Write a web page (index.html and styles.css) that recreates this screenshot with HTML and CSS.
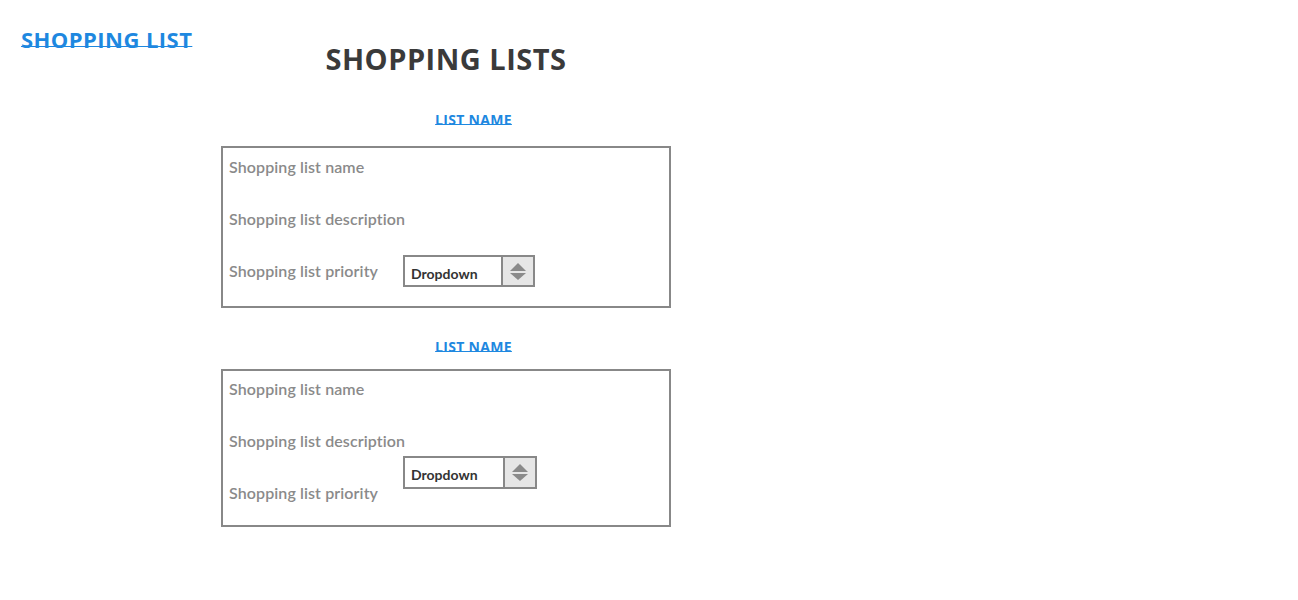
FILE: index.html
```html
<!DOCTYPE html>
<html>
<head>
<meta charset="utf-8">
<title>Shopping lists</title>
<link rel="stylesheet" href="styles.css">
</head>
<body>
<div class="page">
  <aside class="sidebar">
    <a class="brand" href="#">SHOPPING LIST</a>
  </aside>
  <main class="main">
    <h1 class="title">SHOPPING LISTS</h1>

    <section class="list">
      <a class="list-name" href="#">LIST NAME</a>
      <div class="card">
        <div class="field">Shopping list name</div>
        <div class="field">Shopping list description</div>
        <div class="field field-select">
          <span class="label">Shopping list priority</span>
          <div class="dropdown">
            <span class="dropdown-text">Dropdown</span>
            <span class="dropdown-btn"><span class="tri-up"></span><span class="tri-down"></span></span>
          </div>
        </div>
      </div>
    </section>

    <section class="list list-second">
      <a class="list-name" href="#">LIST NAME</a>
      <div class="card">
        <div class="field">Shopping list name</div>
        <div class="field">Shopping list description</div>
        <div class="field field-raised">
          <span class="label">Shopping list priority</span>
          <div class="dropdown dropdown-raised">
            <span class="dropdown-text">Dropdown</span>
            <span class="dropdown-btn"><span class="tri-up"></span><span class="tri-down"></span></span>
          </div>
        </div>
      </div>
    </section>
  </main>
</div>
</body>
</html>
```
FILE: styles.css
```css
html, body {
  margin: 0;
  padding: 0;
  background: #ffffff;
}

.page {
  display: flex;
  align-items: flex-start;
  font-family: "Open Sans", "Liberation Sans", sans-serif;
}

.sidebar {
  width: 200px;
  padding: 24px 0 0 21px;
  flex: none;
}

.brand {
  display: inline-block;
  font-size: 22px;
  letter-spacing: 0.45px;
  font-weight: 700;
  color: #1e88e0;
  text-decoration: underline;
  text-decoration-thickness: 1px;
  text-underline-offset: -2px;
  text-decoration-skip-ink: none;
  text-decoration-color: #1e88e0;
}

.main {
  width: 450px;
  padding-top: 40px;
  display: flex;
  flex-direction: column;
}

.title {
  margin: 0;
  font-size: 29px;
  letter-spacing: 0.5px;
  line-height: 38px;
  font-weight: 700;
  color: #3a3a3a;
  text-align: center;
}

.list {
  display: flex;
  flex-direction: column;
  margin-top: 33px;
}

.list-second {
  margin-top: 30px;
}

.list-name {
  align-self: center;
  margin-left: 55px;
  font-size: 14px;
  letter-spacing: 0.3px;
  line-height: 18px;
  font-weight: 700;
  color: #1e88e0;
  text-decoration: underline;
  text-decoration-thickness: 1px;
  text-underline-offset: -1px;
  text-decoration-skip-ink: none;
}

.card {
  margin-top: 17px;
  border: 2px solid #888888;
  padding: 9px 6px 19px 6px;
  font-family: "Lato", "Open Sans", sans-serif;
  font-size: 16px;
  letter-spacing: 0.1px;
  color: #8a8a8a;
  font-weight: 600;
}

.list-second .card {
  margin-top: 13px;
  padding-top: 8px;
  padding-bottom: 22px;
}

.field {
  height: 20px;
  line-height: 20px;
}

.field + .field {
  margin-top: 32px;
}

.field-select {
  display: flex;
  align-items: center;
  height: 32px;
  margin-top: 26px !important;
}

.field-raised {
  display: flex;
  align-items: flex-start;
}

.label {
  width: 174px;
  flex: none;
}

.dropdown {
  display: flex;
  width: 128px;
  height: 28px;
  border: 2px solid #888888;
  background: #ffffff;
}

.dropdown-raised {
  width: 130px;
  margin-top: -27px;
  height: 29px;
}

.dropdown-text {
  flex: 1;
  padding-left: 6px;
  padding-top: 5px;
  font-family: "Lato", "Open Sans", sans-serif;
  font-size: 14px;
  letter-spacing: 0;
  font-weight: 700;
  color: #333333;
  line-height: 24px;
}

.dropdown-btn {
  width: 30px;
  border-left: 2px solid #888888;
  background: #e6e6e6;
  display: flex;
  flex-direction: column;
  align-items: center;
  justify-content: center;
  gap: 2px;
}

.tri-up {
  width: 0;
  height: 0;
  border-left: 8px solid transparent;
  border-right: 8px solid transparent;
  border-bottom: 8px solid #8a8a8a;
}

.tri-down {
  width: 0;
  height: 0;
  border-left: 8px solid transparent;
  border-right: 8px solid transparent;
  border-top: 7px solid #8a8a8a;
}
```
